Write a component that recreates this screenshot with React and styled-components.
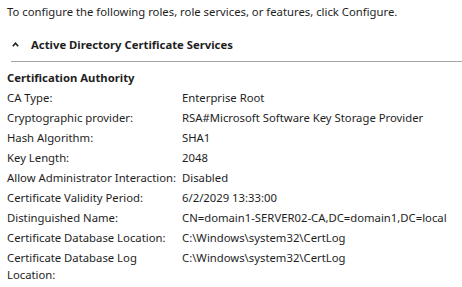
import React from "react";
import styled, { createGlobalStyle } from "styled-components";

const Global = createGlobalStyle`
  html, body { margin: 0; padding: 0; background: #fff; }
  body {
    font-family: "Noto Sans", "Open Sans", sans-serif;
    font-size: 11.3px;
    color: #1e1e1e;
  }
`;

const Page = styled.div`
  width: 462px;
  height: 287px;
  overflow: hidden;
  box-sizing: border-box;
  padding: 4px 0 0 7px;
`;

const Intro = styled.p`
  margin: 0;
  line-height: 16px;
`;

const SectionHeader = styled.div`
  display: flex;
  align-items: center;
  gap: 12px;
  margin-top: 16px;
  padding-left: 5px;
  height: 16px;
  font-weight: 700;
`;

const Divider = styled.hr`
  margin: 9px 0 0 4px;
  border: 0;
  border-top: 1px solid #a6a6a6;
`;

const GroupTitle = styled.div`
  margin-top: 8px;
  font-weight: 700;
  line-height: 16px;
`;

const Grid = styled.dl`
  display: grid;
  grid-template-columns: 175px 1fr;
  row-gap: 3px;
  margin: 3px 0 0 0;
  line-height: 17px;
`;

const Label = styled.dt`
  margin: 0;
  padding-right: 4px;
`;

const Value = styled.dd`
  margin: 0;
  white-space: nowrap;
`;

const Chevron = () => (
  <svg width="7" height="5" viewBox="0 0 7 5" aria-hidden="true">
    <polyline points="0.8,4.3 3.5,1.3 6.2,4.3" fill="none" stroke="#1e1e1e" strokeWidth="1.6" />
  </svg>
);

const rows = [
  ["CA Type:", "Enterprise Root"],
  ["Cryptographic provider:", "RSA#Microsoft Software Key Storage Provider"],
  ["Hash Algorithm:", "SHA1"],
  ["Key Length:", "2048"],
  ["Allow Administrator Interaction:", "Disabled"],
  ["Certificate Validity Period:", "6/2/2029 13:33:00"],
  ["Distinguished Name:", "CN=domain1-SERVER02-CA,DC=domain1,DC=local"],
  ["Certificate Database Location:", "C:\\Windows\\system32\\CertLog"],
  ["Certificate Database Log Location:", "C:\\Windows\\system32\\CertLog"],
];

export default function App() {
  return (
    <>
      <Global />
      <Page>
        <Intro>To configure the following roles, role services, or features, click Configure.</Intro>
        <SectionHeader>
          <Chevron />
          <span>Active Directory Certificate Services</span>
        </SectionHeader>
        <Divider />
        <GroupTitle>Certification Authority</GroupTitle>
        <Grid>
          {rows.map(([l, v]) => (
            <React.Fragment key={l}>
              <Label>{l}</Label>
              <Value>{v}</Value>
            </React.Fragment>
          ))}
        </Grid>
      </Page>
    </>
  );
}
